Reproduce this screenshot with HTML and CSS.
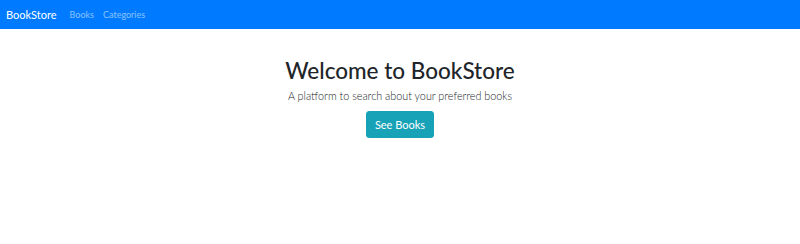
FILE: index.html
```html
<!DOCTYPE html>
<html lang="en">
<head>
    <meta charset="UTF-8">
    <title>BookStore</title>
    <link rel="stylesheet" href="styles.css">
</head>
<body>
    <nav class="navbar">
        <a href="#" class="brand">BookStore</a>
        <a href="#" class="nav-link">Books</a>
        <a href="#" class="nav-link">Categories</a>
    </nav>

    <div class="hero">
        <h1>Welcome to BookStore</h1>
        <p class="lead">A platform to search about your preferred books</p>
        <a href="#" class="btn-info">See Books</a>
    </div>
</body>
</html>
```

FILE: styles.css
```css
body {
    font-family: Lato, sans-serif;
    margin: 0;
    color: #212529;
    background: #fff;
}

.navbar {
    background-color: #007bff;
    height: 29px;
    display: flex;
    align-items: center;
    padding: 0 6px;
}

.brand {
    color: #fff;
    text-decoration: none;
    font-size: 11px;
    margin-right: 13px;
}

.nav-link {
    color: rgba(255, 255, 255, 0.55);
    text-decoration: none;
    font-size: 9px;
    margin-right: 9px;
}

.hero {
    display: flex;
    flex-direction: column;
    align-items: center;
    padding-top: 27px;
}

h1 {
    font-size: 22.5px;
    font-weight: 500;
    margin: 0;
    line-height: 30px;
}

.lead {
    font-size: 10.8px;
    font-weight: 300;
    color: #212529;
    margin: 1px 0 7px;
    line-height: 17px;
}

.btn-info {
    background-color: #17a2b8;
    border: 1px solid #17a2b8;
    color: #fff;
    text-decoration: none;
    font-size: 11px;
    padding: 4px 8px;
    border-radius: 3px;
    line-height: 17px;
}
```
